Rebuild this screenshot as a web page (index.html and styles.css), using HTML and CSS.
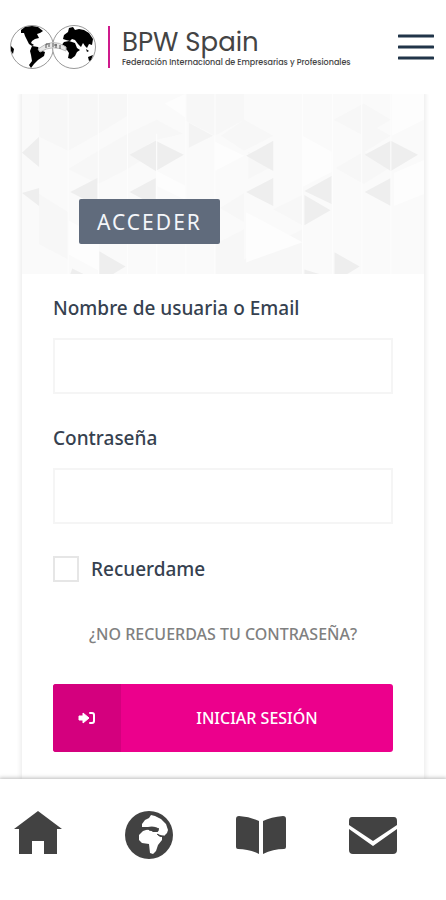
FILE: index.html
```html
<!DOCTYPE html>
<html lang="es">
<head>
<meta charset="utf-8">
<meta name="viewport" content="width=device-width, initial-scale=1">
<title>BPW Spain - Acceder</title>
<link rel="stylesheet" href="styles.css">
</head>
<body>
<header class="topbar">
  <a class="brand" href="#">
    <svg class="brand-mark" viewBox="0 0 86 46" aria-hidden="true">
      <g fill="#fff" stroke="#999" stroke-width="1">
        <circle cx="22" cy="23" r="21.500"/>
        <circle cx="64" cy="23" r="21.500"/>
      </g>
      <g fill="#000">
        <path d="M11 6 15 3 22 2 28 3 33 7 30 9 27 10 29 14 25 15 22 17 21 19 24 21 22 22 19 20 17 16 15 12 14 9 11 9Z"/>
        <path d="M22 22 28 23 30 26 35 28 34 32 31 34 28 36 24 40 21 44 19 41 22 37 21 31 20 27Z"/>
        <path d="M1 22 4 25 3 30 1 27Z"/>
        <path d="M53 15 54 11 58 8 59 4 63 3 65 6 69 5 74 6 79 9 83 15 82 21 79 20 77 24 75 22 73 19 71 23 68 20 65 16 62 15 60 17 56 16Z"/>
        <path d="M54 18 59 17 65 19 67 24 70 26 67 28 65 32 61 35 58 34 59 29 57 26 53 25 51 22Z"/>
        <path d="M78 33 83 31 81 36 79 37ZM76 25 79 27 77 28Z"/>
      </g>
      <path d="M28 25Q43 13 56 23V27Q43 20 30 28Z" fill="#e8e8e8" stroke="#bbb"/>
      <path d="M36 20V24M39 19V23M43 19V23M46 20V24M50 21V25M36 20H38M44 21H47" stroke="#555" fill="none"/>
    </svg>
    <span class="brand-text">
      <span class="brand-name">BPW Spain</span>
      <span class="brand-tagline">Federación Internacional de Empresarias y Profesionales</span>
    </span>
  </a>
  <button class="menu-button" type="button" aria-label="Menú">
    <svg viewBox="0 0 36 26" aria-hidden="true"><path d="M1 2H35M1 13H35M1 24H35" stroke="#213549" stroke-width="3" stroke-linecap="round"/></svg>
  </button>
</header>

<main class="page">
  <section class="card">
    <div class="banner">
      <svg class="pattern" viewBox="0 0 400 180" preserveAspectRatio="xMidYMid slice" aria-hidden="true">
        <rect width="400" height="180" fill="#fafafa"/>
        <g fill="#f7f7f7">
          <path d="M17 0H105V22L76 40 46 57 17 43ZM76 57 105 40 134 57 105 75 76 90 46 75ZM105 40 134 26 160 40 134 46 107 60ZM163 0H221V26L192 42 163 27ZM198 42 221 26 250 42 221 57ZM225 58 250 72 225 85ZM221 99V128L197 114ZM279 101V131L250 115ZM310 26 340 10 367 26 340 42ZM338 26 367 42 338 60ZM312 74 340 58 367 73 340 90ZM17 100 46 118V165L17 150ZM221 135V180H192V150ZM250 150 279 135V180H221V165Z"/>
        </g>
        <g fill="#fdfdfd">
          <path d="M279 42 308 58V78L279 93ZM370 79 400 66V100L370 112ZM223 118 279 148 223 168ZM46 126 76 142V176L46 160ZM134 77 163 92V106L134 92ZM163 0 142 10 163 24ZM368 0H400V26L368 42ZM192 48 221 62 192 77Z"/>
        </g>
        <g fill="#eee">
          <path d="M17 43V73L0 59ZM17 94V112L0 99ZM75 84V112L48 98ZM107 61 133 47 161 61 133 77ZM133 84V112L107 98ZM250 47V77L223 62ZM250 84V112L223 98ZM308 82V110L281 97ZM281 101 307 116 281 131ZM341 61 367 47 394 61 367 77ZM367 84V112L341 98ZM311 158 336 172 323 180H311ZM281 175 297 180H281ZM77 157 103 172 90 180H77ZM50 174 62 180H48Z"/>
        </g>
        <path d="M166 29 190 42 166 54Z" fill="#f3f3f3"/>
        <path d="M46 0V180M76 0V180M105 0V180M134 40V180M163 0V180M192 0V180M279 0V180M309 0V180M338 0V180M367 0V180" stroke="#fdfdfd"/>
      </svg>
      <h1 class="title">ACCEDER</h1>
    </div>
    <form class="form">
      <div class="field">
        <label for="user">Nombre de usuaria o Email</label>
        <input id="user" type="text">
      </div>
      <div class="field">
        <label for="pass">Contraseña</label>
        <input id="pass" type="password">
      </div>
      <div class="remember">
        <input id="remember" type="checkbox">
        <label for="remember">Recuerdame</label>
      </div>
      <a class="forgot" href="#">¿NO RECUERDAS TU CONTRASEÑA?</a>
      <button class="submit" type="submit">
        <span class="submit-icon">
          <svg viewBox="0 0 18 14" aria-hidden="true">
            <path d="M1 5H5V2L11 7 5 12V9H1Z" fill="#fff" stroke="#fff" stroke-linejoin="round"/>
            <path d="M12 2H14Q16 2 16 4V10Q16 12 14 12H12" fill="none" stroke="#fff" stroke-width="2" stroke-linecap="round"/>
          </svg>
        </span>
        <span class="submit-label">INICIAR SESIÓN</span>
      </button>
    </form>
  </section>
</main>

<nav class="tabs" aria-label="Principal">
  <a href="#" aria-label="Inicio"><svg viewBox="0 0 50 50" aria-hidden="true"><path d="M26 1 50 19H45V44H32V31H20V44H7V19H2Z" fill="#424242"/></svg></a>
  <a href="#" aria-label="Mundo"><svg viewBox="0 0 50 50" aria-hidden="true"><circle cx="25" cy="25" r="24" fill="#424242"/><path d="M18 14 21 10 25 8 27 5 31 6 37 9 42 14 44 20 43 23 40 26 36 26 33 23 35 20 30 17 18 17ZM19 21 25 19 29 22 34 22 34 25 38 27 38 30 34 35 32 41 29 44 26 43 25 34 18 33 15 30 15 25Z" fill="#fff"/><path d="M20 19Q28 15 35 19Q29 22 25 20M33 24Q36 28 40 26" fill="#424242" stroke="#424242"/></svg></a>
  <a href="#" aria-label="Biblioteca"><svg viewBox="0 0 50 50" aria-hidden="true"><path d="M0 9Q0 6 3 6Q15 7 23 11V44Q13 39 2 39Q0 39 0 37ZM50 9Q50 6 47 6Q35 7 27 11V44Q37 39 48 39Q50 39 50 37Z" fill="#424242"/></svg></a>
  <a href="#" aria-label="Mensajes"><svg viewBox="0 0 50 50" aria-hidden="true"><path d="M4 7H46Q49 7 49 11V15L25 31 1 15V11Q1 7 4 7ZM1 19 25 36 49 19V40Q49 44 45 44H5Q1 44 1 40Z" fill="#424242"/></svg></a>
</nav>
</body>
</html>
```

FILE: styles.css
```css
* { box-sizing: border-box; }

body {
  margin: 0;
  min-height: 100vh;
  display: flex;
  flex-direction: column;
  background: #fff;
  color: #36414f;
  font-family: "Noto Sans", "Open Sans", sans-serif;
}

.topbar {
  display: flex;
  align-items: center;
  justify-content: space-between;
  padding: 24px 12px 24px 10px;
}

.brand {
  display: flex;
  align-items: center;
  gap: 12px;
  color: #444;
  text-decoration: none;
}

.brand-mark { width: 86px; height: 46px; }

.brand-text {
  display: flex;
  flex-direction: column;
  padding-left: 12px;
  border-left: 2px solid #cf1a8c;
  font-family: Poppins, Inter, sans-serif;
}

.brand-name { font-size: 26px; line-height: 32px; }
.brand-tagline { font-size: 8px; line-height: 10px; font-weight: 500; white-space: nowrap; }

.menu-button {
  padding: 0;
  border: 0;
  background: none;
}

.menu-button svg { display: block; width: 36px; height: 26px; }

.page {
  flex: 1;
  display: flex;
  padding: 0 22px;
}

.card {
  flex: 1;
  box-shadow: 0 0 4px 2px #eee;
  clip-path: inset(0 -8px);
}

.banner {
  display: flex;
  position: relative;
  height: 180px;
  padding: 0 57px 30px;
  align-items: flex-end;
}

.pattern {
  position: absolute;
  inset: 0;
  width: 100%;
  height: 100%;
}

.title {
  position: relative;
  margin: 0;
  padding: 9px 18px 8px;
  border-radius: 2px;
  background: #606b7c;
  color: #f4f6fa;
  font-size: 21px;
  line-height: 28px;
  font-weight: 400;
  letter-spacing: 2px;
}

.form {
  display: flex;
  flex-direction: column;
  padding: 22px 31px 27px;
}

.field {
  display: flex;
  flex-direction: column;
  gap: 18px;
  margin-bottom: 32px;
}

label {
  font-size: 19px;
  line-height: 24px;
  font-weight: 500;
}

.field input {
  width: 100%;
  height: 56px;
  padding: 0 16px;
  border: 2px solid #f5f5f5;
  background: #fff;
  font: inherit;
}

.remember {
  display: flex;
  align-items: center;
  gap: 12px;
}

.remember input {
  appearance: none;
  width: 26px;
  height: 26px;
  margin: 0;
  border: 2px solid #e6e6e6;
  background: #fff;
}

.forgot {
  margin: 39px 0 37px;
  color: #808080;
  font-size: 16px;
  font-weight: 500;
  line-height: 26px;
  text-align: center;
  text-decoration: none;
}

.submit {
  display: flex;
  height: 68px;
  padding: 0;
  overflow: hidden;
  border: 0;
  border-radius: 3px;
  background: #ec008c;
  color: #fff;
  font-family: inherit;
  font-size: 16px;
  line-height: 24px;
  font-weight: 500;
}

.submit-icon {
  display: grid;
  place-items: center;
  width: 68px;
  height: 100%;
  background: #d4007e;
}

.submit-icon svg { width: 18px; height: 14px; }
.submit-label { flex: 1; align-self: center; }

.tabs {
  position: relative;
  display: flex;
  justify-content: space-between;
  padding: 31px 48px 40px 12px;
  background: #fff;
  box-shadow: 0 0 4px 1px #bbb;
}

.tabs svg { display: block; width: 50px; height: 50px; }
```
